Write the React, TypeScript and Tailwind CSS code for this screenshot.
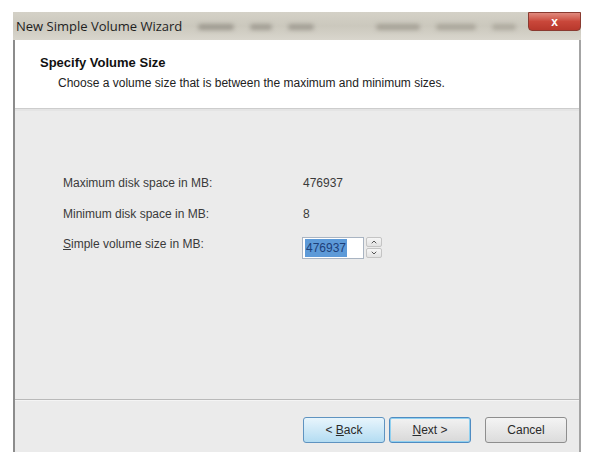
import { ChevronDown, ChevronUp } from "lucide-react";

const rows = [
  { label: "Maximum disk space in MB:", value: "476937" },
  { label: "Minimum disk space in MB:", value: "8" },
];

function WizardButton({
  children,
  variant = "plain",
}: {
  children: React.ReactNode;
  variant?: "plain" | "hover" | "default";
}) {
  const styles = {
    plain: "border-[#8e8e8e] bg-gradient-to-b from-[#f4f4f4] to-[#dcdcdc]",
    hover: "border-[#5f93c0] bg-gradient-to-b from-[#e8f5fc] to-[#b3dcf2]",
    default: "border-[#4f8cc2] bg-gradient-to-b from-[#f2f2f2] to-[#d8d8d8] shadow-[inset_0_0_0_1px_#8fd0f0]",
  }[variant];

  return (
    <button
      type="button"
      className={`flex h-[26px] w-[82px] items-center justify-center whitespace-pre rounded-[3px] border text-[12px] text-[#2a2a2a] ${styles}`}
    >
      {children}
    </button>
  );
}

export default function App() {
  return (
    <div className="h-[462px] w-[590px] bg-white pl-[13px] pt-3 font-['Liberation_Sans',Arial,sans-serif]">
      <div className="w-[568px]">
        {/* title bar */}
        <div className="flex h-[28px] items-start justify-between bg-gradient-to-b from-[#d4d1c7] via-[#cbc8bd] to-[#d9d6cd]">
          <div className="flex h-full min-w-0 items-center gap-4 pt-[2px]">
            <span className="shrink-0 whitespace-nowrap pl-[3px] font-['Open_Sans',sans-serif] text-[13px] text-[#1e1e1e]">
              New Simple Volume Wizard
            </span>
            <span className="h-[6px] w-[36px] rounded bg-[#9e9a90] blur-[2px]" />
            <span className="h-[6px] w-[22px] rounded bg-[#a29e94] blur-[2px]" />
            <span className="h-[6px] w-[26px] rounded bg-[#a29e94] blur-[2px]" />
            <span className="w-[30px]" />
            <span className="h-[6px] w-[44px] rounded bg-[#a6a297] blur-[2px]" />
            <span className="h-[6px] w-[40px] rounded bg-[#aaa69b] blur-[2px]" />
            <span className="h-[6px] w-[24px] rounded bg-[#aeaa9f] blur-[2px]" />
          </div>
          <div className="flex h-[19px] w-[53px] shrink-0 items-center justify-center rounded-b-[4px] border border-[#8a3a30] bg-gradient-to-b from-[#e08a7e] via-[#c9473a] to-[#b8382c] text-[12px] font-bold leading-none text-white">
            x
          </div>
        </div>

        <div className="border-l-[2px] border-r-[2px] border-l-[#8c8c8c] border-r-[#a4a4a4]">
          {/* header */}
          <div className="h-[68px] bg-white pl-[25px] pt-[13px]">
            <div className="text-[13px] font-bold text-[#111]">Specify Volume Size</div>
            <div className="pl-[18px] pt-[1px] text-[12px] text-[#222]">
              Choose a volume size that is between the maximum and minimum sizes.
            </div>
          </div>
          <div className="h-[3px] border-t border-[#cdcdcd] bg-[#e4e4e4]" />

          {/* body */}
          <div className="h-[288px] bg-[#ebebeb] pl-[48px] pt-[56px] text-[12px] text-[#3a3a3a]">
            {rows.map((row) => (
              <div key={row.label} className="flex h-[31px] items-center">
                <span className="w-[240px]">{row.label}</span>
                <span>{row.value}</span>
              </div>
            ))}
            <div className="flex h-[31px] items-center">
              <span className="w-[239px] self-start pt-[6px]">
                <span className="underline">S</span>imple volume size in MB:
              </span>
              <div className="flex items-center gap-[2px] pt-[6px]">
                <div className="flex h-[22px] w-[62px] items-center border border-[#a9b4c2] bg-white pl-[2px]">
                  <span className="bg-[#5d9ad8] px-[1px] text-[#1d3f78]">476937</span>
                </div>
                <div className="flex flex-col gap-[1px]">
                  <div className="flex h-[10px] w-[16px] items-center justify-center rounded-[2px] border border-[#c4c4c4] bg-gradient-to-b from-[#f6f6f6] to-[#e2e2e2] text-[#555]">
                    <ChevronUp size={8} strokeWidth={3} />
                  </div>
                  <div className="flex h-[10px] w-[16px] items-center justify-center rounded-[2px] border border-[#c4c4c4] bg-gradient-to-b from-[#f6f6f6] to-[#e2e2e2] text-[#555]">
                    <ChevronDown size={8} strokeWidth={3} />
                  </div>
                </div>
              </div>
            </div>
          </div>

          <div className="h-[2px] border-t border-[#b9b9b9] bg-[#f4f4f4]" />

          {/* footer */}
          <div className="flex h-[51px] items-start gap-[4px] bg-[#ebebeb] pl-[288px] pt-[16px]">
            <WizardButton variant="hover">
              {"< "}
              <span className="underline">B</span>ack
            </WizardButton>
            <WizardButton variant="default">
              <span className="underline">N</span>ext &gt;
            </WizardButton>
            <span className="w-[6px]" />
            <WizardButton>Cancel</WizardButton>
          </div>
        </div>
      </div>
    </div>
  );
}
